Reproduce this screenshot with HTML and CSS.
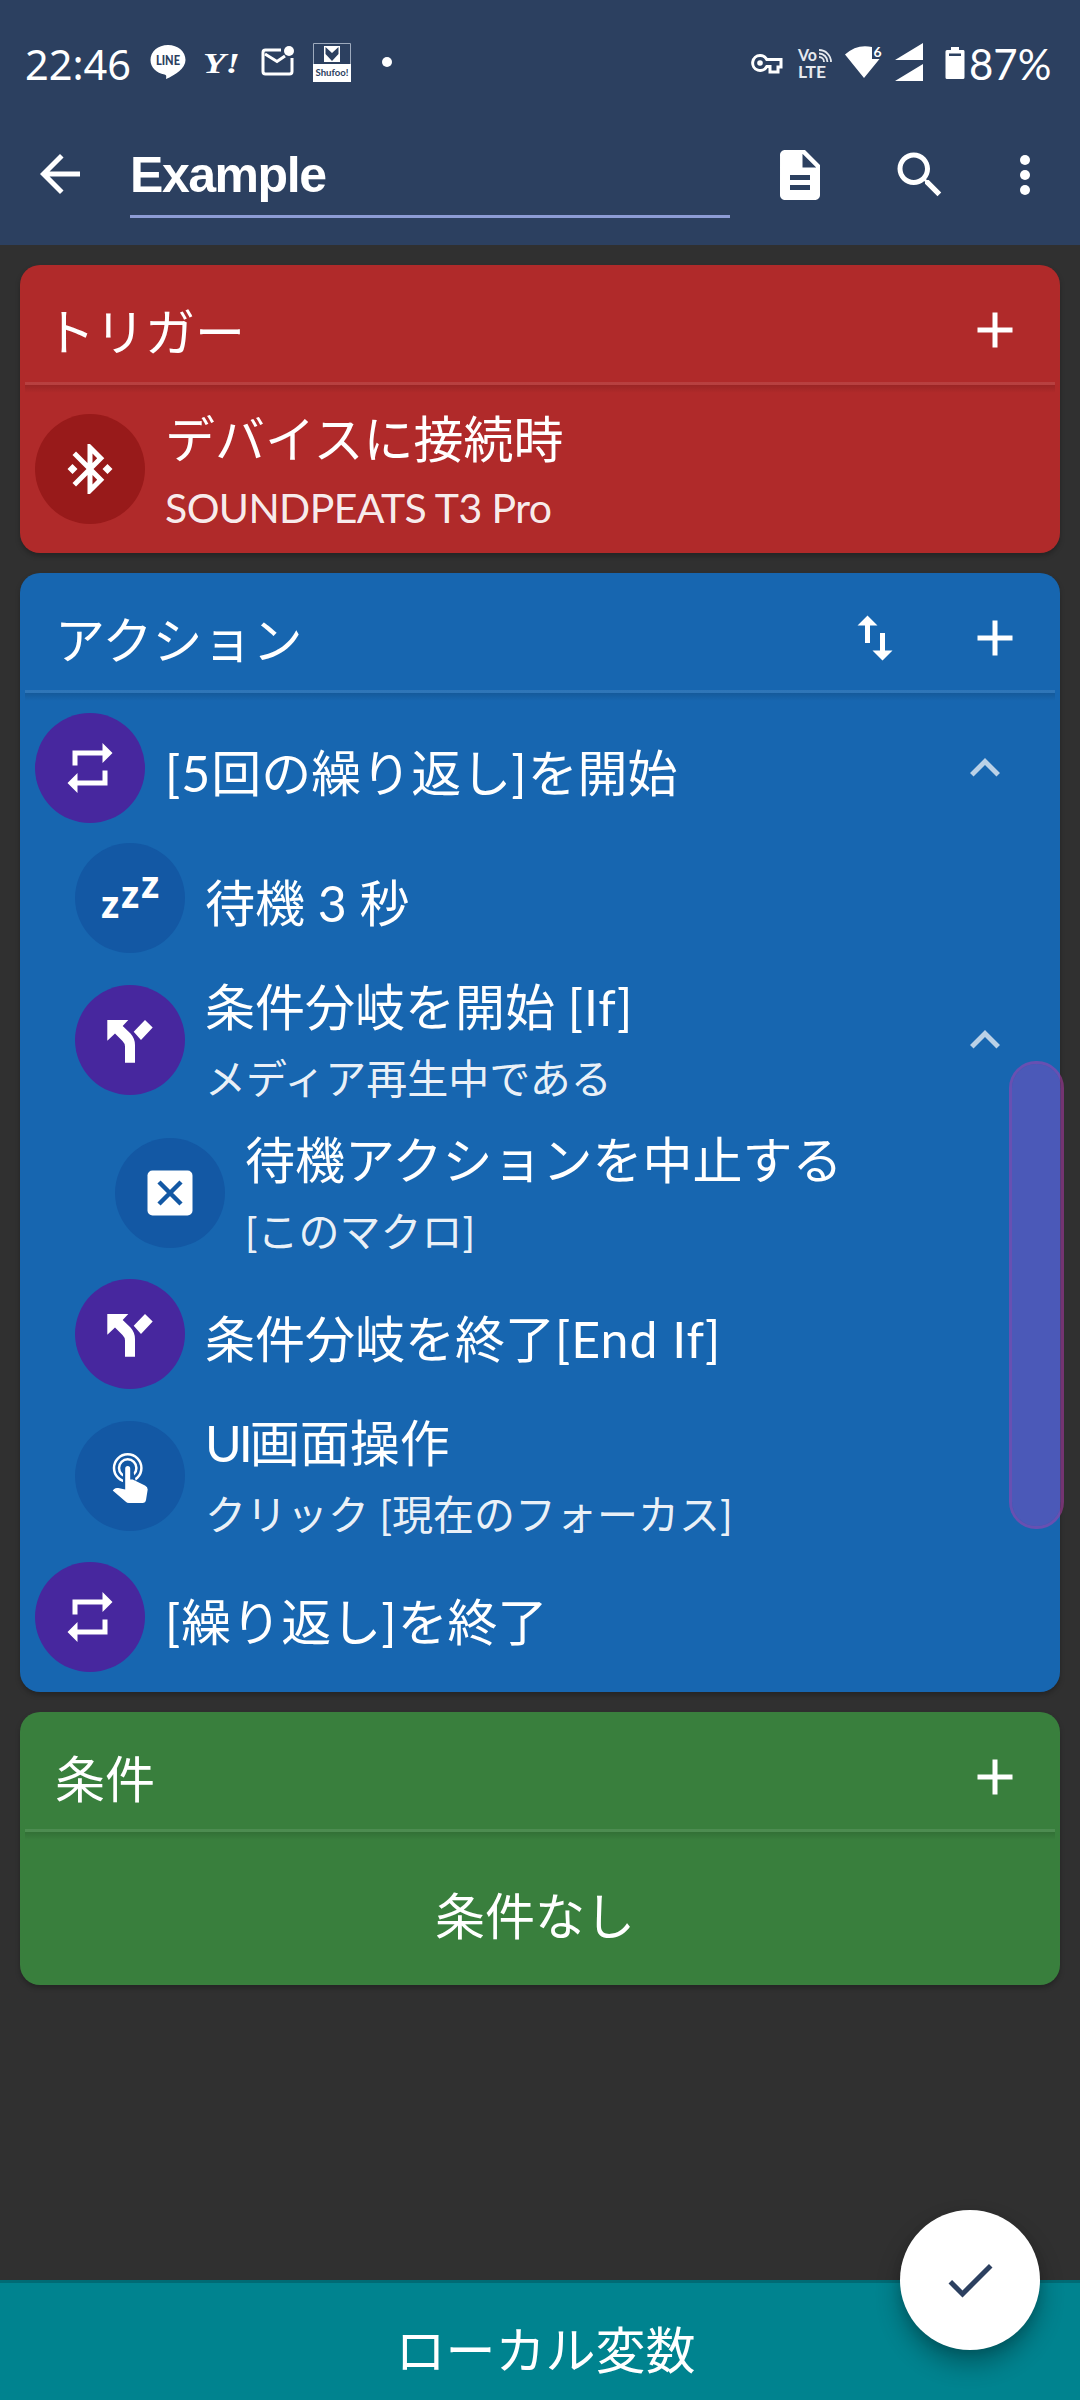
FILE: index.html
```html
<!DOCTYPE html>
<html lang="ja">
<head>
<meta charset="utf-8">
<title>Example</title>
<link rel="stylesheet" href="styles.css">
</head>
<body>
<svg class="defs" aria-hidden="true">
  <symbol id="plus" viewBox="0 0 24 24"><path d="M19 13h-6v6h-2v-6H5v-2h6V5h2v6h6z"/></symbol>
  <symbol id="up" viewBox="0 0 24 24"><path d="M12 8l-6 6 1.41 1.41L12 10.83l4.59 4.58L18 14z"/></symbol>
  <symbol id="repeat" viewBox="0 0 24 24"><path d="M7 7h10v3l4-4-4-4v3H5v6h2V7zm10 10H7v-3l-4 4 4 4v-3h12v-6h-2v4z"/></symbol>
  <symbol id="split" viewBox="0 0 60 60"><path d="M7.300 10H28.300L22.700 16L30.500 23.500Q35 28.500 35 35V52.700H25V36.500Q25 33.500 22.500 31L15 23.500L7.300 30.700ZM45 10L52.700 17.500 41 30 33.700 21.700Z"/></symbol>
</svg>
<div class="screen">
  <header class="top">
    <div class="status">
      <div class="status-left">
        <span class="clock">22:46</span>
        <svg class="line" viewBox="0 0 36 34"><path d="M18 0C8 0 .5 6.500.5 15c0 7.500 6 13 14 14.500 2 .4 2 1.500 1.500 4.500C25 30 35.500 23.500 35.500 15 35.500 6.500 28 0 18 0z"/><text x="6" y="19.500" textLength="24" lengthAdjust="spacingAndGlyphs" class="line-t">LINE</text></svg>
        <svg class="yahoo" viewBox="0 0 40 34"><text x="0" y="28" textLength="37" lengthAdjust="spacingAndGlyphs" class="yahoo-t">Y!</text></svg>
        <svg class="mail" viewBox="0 0 34 30"><path d="M20 4H4.500Q2 4 2 6.500V25.500Q2 28 4.500 28H28.500Q31 28 31 25.500V12" fill="none" stroke="#fff" stroke-width="3"/><path d="M4 8L16 15.500L24 10" fill="none" stroke="#fff" stroke-width="3"/><circle cx="28" cy="5" r="5"/></svg>
        <svg class="shufoo" viewBox="0 0 38 39"><path d="M.5.5h37v38H.5z" fill="none" stroke="#9daabd"/><path d="M0 21h38v18H0zM11 3h16v16H11z"/><path d="M12.500 4v7l6.500 7 6.500-7V4L19 10z" fill="#2c4060"/><path d="M14 3h10l-5 5z"/><text x="2.500" y="33" textLength="33" lengthAdjust="spacingAndGlyphs" class="shufoo-t">Shufoo!</text></svg>
        <i class="dot"></i>
      </div>
      <div class="status-right">
        <svg class="key" viewBox="0 0 32 20"><path d="M9 1.500a7.500 7.500 0 1 0 6.800 11H19v5.500h8V13h3V5.500H15.800A7.500 7.500 0 0 0 9 1.500z" fill="none" stroke="#fff" stroke-width="3"/><circle cx="9" cy="9" r="2.800"/></svg>
        <svg class="volte" viewBox="0 0 34 32"><text x="0" y="12.500" textLength="19" lengthAdjust="spacingAndGlyphs" class="volte-t">Vo</text><text x="0" y="30" textLength="28" lengthAdjust="spacingAndGlyphs" class="volte-t">LTE</text><path d="M21 9a5 5 0 0 1 5 5M21 5.500a8.500 8.500 0 0 1 8.500 8.500M21 2a12 12 0 0 1 12 12" fill="none" stroke="#e6e9ee" stroke-width="1.800"/></svg>
        <svg class="wifi" viewBox="0 0 38 32"><path d="M0 8.500Q12-2.500 27 1V13H34.500L19 32z"/><text x="28.500" y="10.500" class="wifi-t">6</text></svg>
        <svg class="signal" viewBox="0 0 28 38"><path d="M28 0V17H0zM28 21V38H0z"/></svg>
        <svg class="battery" viewBox="0 0 20 32"><path fill-rule="evenodd" d="M6 0h8v3h4.500q1 0 1 1.500v26q0 1.500-1.500 1.500H2q-1.500 0-1.500-1.500v-26Q.5 3 2 3h4zM4 6.500v2.500h12V6.500z"/></svg>
        <span class="percent">87%</span>
      </div>
    </div>
    <div class="toolbar">
      <svg class="ic" viewBox="0 0 24 24"><path d="M20 11H7.830l5.590-5.590L12 4l-8 8 8 8 1.410-1.410L7.830 13H20v-2z"/></svg>
      <div class="name">Example</div>
      <div class="tools">
        <svg class="ic" viewBox="0 0 24 24"><path d="M14 2H6c-1.100 0-1.990.9-1.990 2L4 20c0 1.100.89 2 1.990 2H18c1.100 0 2-.9 2-2V8l-6-6zm2 16H8v-2h8v2zm0-4H8v-2h8v2zm-3-5V3.500L18.500 9H13z"/></svg>
        <svg class="ic" viewBox="0 0 24 24"><path d="M15.500 14h-.79l-.28-.27C15.410 12.590 16 11.110 16 9.500 16 5.910 13.090 3 9.500 3S3 5.910 3 9.500 5.910 16 9.500 16c1.610 0 3.090-.59 4.230-1.570l.27.28v.79l5 4.990L20.490 19l-4.990-5zm-6 0C7.010 14 5 11.990 5 9.500S7.010 5 9.500 5 14 7.010 14 9.500 11.990 14 9.500 14z"/></svg>
        <svg class="ic" viewBox="0 0 24 24"><circle cx="12" cy="6" r="2"/><circle cx="12" cy="12" r="2"/><circle cx="12" cy="18" r="2"/></svg>
      </div>
    </div>
  </header>

  <main class="cards">
    <section class="card red">
      <div class="head"><h2>トリガー</h2><svg class="ic"><use href="#plus"/></svg></div>
      <div class="row latin">
        <div class="badge"><svg class="ic" viewBox="0 0 24 24"><path d="M7 12l-2-2-2 2 2 2 2-2zm10.710-4.290L12 2h-1v7.590L6.410 5 5 6.410 10.590 12 5 17.590 6.410 19 11 14.410V22h1l5.710-5.710-4.300-4.290 4.300-4.290zM13 5.830l1.880 1.880L13 9.590V5.830zm1.880 10.460L13 18.170v-3.760l1.880 1.880zM19 10l-2 2 2 2 2-2-2-2z"/></svg></div>
        <div class="text"><div class="t">デバイスに接続時</div><div class="s">SOUNDPEATS T3 Pro</div></div>
      </div>
    </section>

    <section class="card blue">
      <div class="head"><h2>アクション</h2><svg class="ic" viewBox="0 0 24 24"><path d="M16 17.010V10h-2v7.010h-3L15 21l4-3.990h-3zM9 3L5 6.990h3V14h2V6.990h3L9 3z"/></svg><svg class="ic"><use href="#plus"/></svg></div>
      <div class="row one">
        <div class="badge purple"><svg class="ic"><use href="#repeat"/></svg></div>
        <div class="text"><div class="t"><span class="en">[5</span>回の繰り返し<span class="en">]</span>を開始</div></div>
        <svg class="ic chev"><use href="#up"/></svg>
      </div>
      <div class="row one in1">
        <div class="badge"><div class="zzz"><span>z</span><span>z</span><span>z</span></div></div>
        <div class="text"><div class="t">待機 3 秒</div></div>
      </div>
      <div class="row in1">
        <div class="badge purple"><svg class="ic"><use href="#split"/></svg></div>
        <div class="text"><div class="t">条件分岐を開始 <span class="en">[If]</span></div><div class="s">メディア再生中である</div></div>
        <svg class="ic chev"><use href="#up"/></svg>
      </div>
      <div class="row in2">
        <div class="badge"><svg class="ic" viewBox="0 0 60 60"><rect x="7.500" y="7.500" width="45" height="45" rx="5"/><path d="M19 19L41 41M41 19L19 41" stroke="#1358a4" stroke-width="4.500"/></svg></div>
        <div class="text"><div class="t">待機アクションを中止する</div><div class="s">[このマクロ]</div></div>
      </div>
      <div class="row one in1">
        <div class="badge purple"><svg class="ic"><use href="#split"/></svg></div>
        <div class="text"><div class="t">条件分岐を終了<span class="en">[End If]</span></div></div>
      </div>
      <div class="row in1">
        <div class="badge"><svg class="ic" viewBox="0 0 60 60"><circle cx="27.700" cy="22" r="13.700" fill="none" stroke="#fff" stroke-width="2.500"/><circle cx="27.700" cy="22" r="8.700" fill="none" stroke="#fff" stroke-width="2.500"/><path class="mask" d="M23 24h10l4 16H23z"/><path d="M25.200 22.500a2.500 2.500 0 0 1 5 0v11h2.500L45 39.500q2.700 1.300 2.700 4L46 54q-.5 3-3.500 3H29q-2 0-3.500-1.500L12.700 44.500l1.500-1.500q1.500-1.500 4-1l7 1.500z"/></svg></div>
        <div class="text"><div class="t"><span class="ui">UI</span>画面操作</div><div class="s">クリック [現在のフォーカス]</div></div>
      </div>
      <div class="row one">
        <div class="badge purple"><svg class="ic"><use href="#repeat"/></svg></div>
        <div class="text"><div class="t"><span class="en">[</span>繰り返し<span class="en">]</span>を終了</div></div>
      </div>
    </section>

    <section class="card green">
      <div class="head"><h2>条件</h2><svg class="ic"><use href="#plus"/></svg></div>
      <div class="none">条件なし</div>
    </section>
  </main>

  <footer class="bottom">ローカル変数</footer>
  <div class="handle"></div>
  <div class="fab"><svg class="ic" viewBox="0 0 24 24"><path d="M9 16.170L4.830 12l-1.420 1.410L9 19 21 7l-1.410-1.410z"/></svg></div>
</div>
</body>
</html>
```
FILE: styles.css
```css
* { box-sizing: border-box; }
body { margin: 0; background: #303030; }
.defs { position: absolute; width: 0; height: 0; }
.screen {
  position: relative; width: 1080px; height: 2400px; overflow: hidden;
  display: flex; flex-direction: column;
  background: #303030; color: #fff;
  font-family: Lato, "Noto Sans CJK JP", sans-serif;
}
svg { fill: #fff; flex: none; display: block; overflow: visible; }
.ic { width: 60px; height: 60px; }

.top { height: 245px; flex: none; background: #2c4060; }
.status { height: 105px; padding: 0 28px 0 25px; display: flex; justify-content: space-between; }
.status-left, .status-right { display: flex; align-items: flex-start; }
.clock { width: 110px; margin-top: 34px; font: 41.500px/60px "Noto Sans", sans-serif; }
.line { width: 36px; height: 34px; margin: 45px 0 0 15px; }
.line-t { font: 900 12.500px Lato, sans-serif; fill: #2c4060; }
.yahoo { width: 40px; height: 34px; margin: 45px 0 0 17px; }
.yahoo-t { font: italic bold 30px "Liberation Serif", serif; }
.mail { width: 34px; height: 30px; margin: 46px 0 0 18px; }
.shufoo { width: 38px; height: 39px; margin: 43px 0 0 18px; }
.shufoo-t { font: 700 10px Lato, sans-serif; fill: #2c4060; }
.dot { width: 10px; height: 10px; margin: 57px 0 0 31px; border-radius: 50%; background: #fff; }
.key { width: 32px; height: 20px; margin: 54px 15px 0 0; }
.volte { width: 34px; height: 32px; margin: 48px 13px 0 0; }
.volte-t { font: 700 17px Lato, sans-serif; fill: #e6e9ee; }
.wifi { width: 38px; height: 32px; margin: 46px 12px 0 0; }
.wifi-t { font: 700 14px Lato, sans-serif; }
.signal { width: 28px; height: 38px; margin: 43px 22px 0 0; }
.battery { width: 20px; height: 32px; margin: 47px 4px 0 0; }
.percent { width: 83px; margin-top: 34px; font: 42px/60px Lato, sans-serif; white-space: nowrap; }

.toolbar { height: 140px; padding: 39px 25px 0 30px; display: flex; align-items: flex-start; }
.name {
  width: 600px; height: 74px; margin-left: 40px; padding-top: 1px;
  border-bottom: 3px solid #8d9cd5;
  font: bold 50px/60px "Liberation Sans", sans-serif;
  letter-spacing: -1.450px;
}
.tools { display: flex; gap: 60px; margin: 1px 0 0 40px; }
.tools .ic:last-child { margin-left: -15px; }

.cards { flex: 1; padding: 20px; display: flex; flex-direction: column; gap: 20px; }
.card { border-radius: 20px; padding-bottom: 10px; box-shadow: 0 3px 5px rgba(0,0,0,.25); }
.red { height: 288px; background: #b02a2a; }
.blue { height: 1119px; background: #1766b0; }
.green { height: 273px; background: #397f3d; }
.head {
  height: 130px; padding: 0 35px; display: flex; align-items: center; gap: 60px;
  background:
    linear-gradient(rgba(255,255,255,.1), rgba(255,255,255,.1)) 5px 117px / 1030px 3px no-repeat,
    linear-gradient(rgba(0,0,0,.12), rgba(0,0,0,0)) 5px 120px / 1030px 8px no-repeat;
}
.red .head { padding-left: 25px; }
h2 { flex: 1; margin: 3px 0 0; font-size: 50px; line-height: 70px; font-weight: 400; }
.row { height: 153px; padding: 0 45px 0 15px; display: flex; align-items: center; }
.latin { height: 148px; }
.one { height: 130px; }
.in1 { padding-left: 55px; }
.in2 { padding-left: 95px; }
.badge {
  width: 110px; height: 110px; flex: none; border-radius: 50%;
  display: flex; align-items: center; justify-content: center; background: #1358a4;
}
.red .badge { background: #981a1a; }
.badge.purple { background: #47279e; }
.text { flex: 1; align-self: flex-start; margin: 9px 0 0 20px; white-space: nowrap; }
.t { height: 70px; font-size: 50px; line-height: 70px; }
.one .text { margin-top: 35px; }
.s { height: 60px; margin-top: 7px; font-size: 41px; line-height: 60px; color: rgba(255,255,255,.93); }
.latin .s { margin-top: 4px; letter-spacing: -.6px; }
.en { letter-spacing: 1px; }
.ui { letter-spacing: -3px; }
.mask { fill: #1358a4; }
.chev { opacity: .7; }
.zzz { display: flex; gap: 1px; font: bold 37px/40px "Noto Sans", sans-serif; }
.zzz span { width: 19px; text-align: center; margin-top: 12px; }
.zzz span:nth-child(2) { margin-top: 2px; }
.zzz span:nth-child(3) { margin-top: -8px; }
.none { height: 133px; padding: 39px 10px 0 0; text-align: center; font-size: 50px; line-height: 70px; }

.bottom {
  height: 120px; flex: none; padding: 32px 0 0 11px; background: #00838f; border-top: 3px solid #006b75;
  text-align: center; font-size: 50px; line-height: 70px;
}
.handle {
  position: absolute; left: 1009px; top: 1061px; width: 55px; height: 468px; border-radius: 27px;
  background: rgba(128,76,192,.5); border: 3px solid rgba(185,58,180,.5);
  background-clip: padding-box;
}
.fab {
  position: absolute; left: 900px; top: 2210px; width: 140px; height: 140px; border-radius: 50%;
  display: flex; align-items: center; justify-content: center;
  background: #fff; box-shadow: 0 14px 24px rgba(0,0,0,.3), 0 3px 10px rgba(0,0,0,.1);
}
.fab svg { fill: #2c4060; }
```
